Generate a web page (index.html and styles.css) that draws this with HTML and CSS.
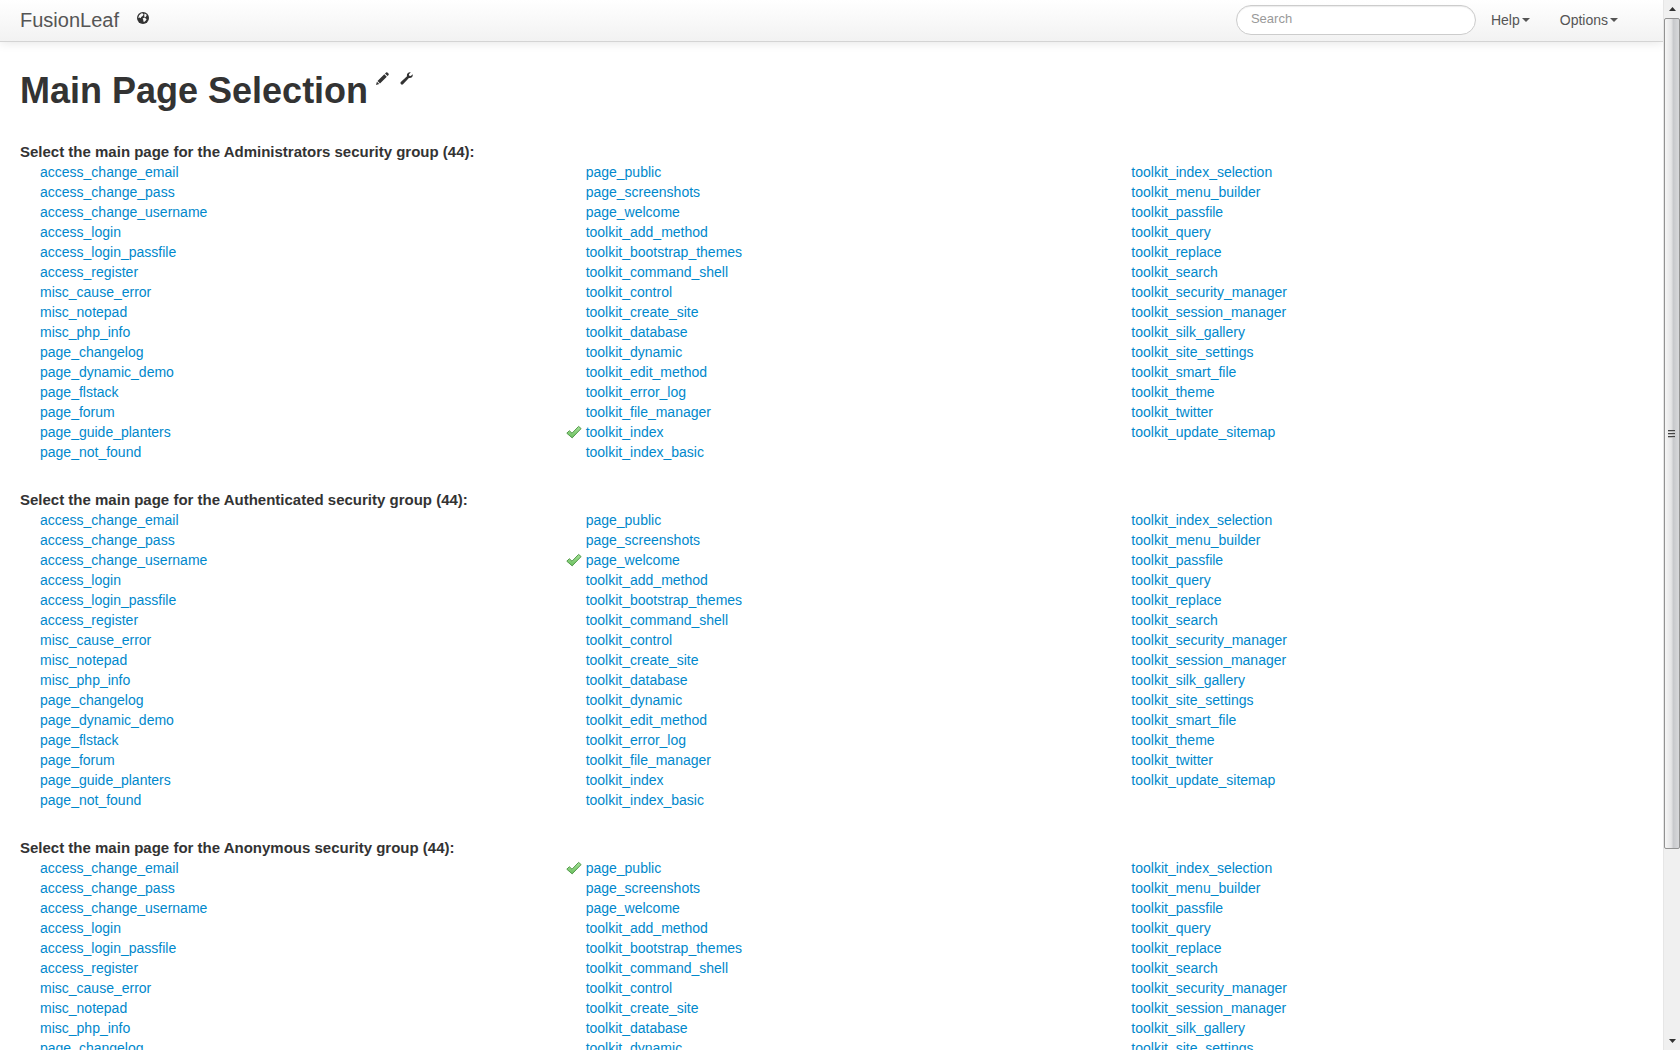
FILE: index.html
```html
<!DOCTYPE html>
<html lang="en">
<head>
<meta charset="utf-8">
<title>Main Page Selection - FusionLeaf</title>
<link rel="stylesheet" href="styles.css">
</head>
<body>
<svg class="sprite" aria-hidden="true">
  <defs>
    <linearGradient id="tick-fill" x1="0" y1="0" x2="0" y2="1">
      <stop offset="0" stop-color="#a4e096"/>
      <stop offset="1" stop-color="#6cc060"/>
    </linearGradient>
  </defs>
  <symbol id="tick" viewBox="0 0 16 16">
    <path d="M.8 9.2 3.3 6.7 6 9.2 12.6 2.4 15.1 4.6 6.2 13.9Z" fill="url(#tick-fill)" stroke="#559a4d" stroke-width="1" stroke-linejoin="round"/>
  </symbol>
</svg>
<div class="viewport">
  <div class="page">
    <header class="navbar">
      <a class="brand" href="#">FusionLeaf</a>
      <a class="globe" href="#" aria-label="Site">
        <svg width="12" height="12" viewBox="0 0 12 12"><circle cx="6" cy="6" r="6" fill="#333"/><path d="M2 3.4 4 1.4 5.4 1.2 6.6 2.4 5.6 4 4.2 5 3.6 6.2 2.4 5.4 1.2 6.2ZM7.4 1.4 9.4 2.4 9.6 3.8 8.4 5.2 7.2 4.4ZM5.6 6.6 7.6 5.6 9.6 7.2 8.8 8.6 7.2 10 6.2 9.2 6.4 8Z" fill="#fafafa"/></svg>
      </a>
      <form class="search"><input class="search-box" type="search" placeholder="Search" aria-label="Search"></form>
      <nav class="menu">
        <button class="menu-item" type="button">Help<span class="caret"></span></button>
        <button class="menu-item" type="button">Options<span class="caret"></span></button>
      </nav>
    </header>
    <main class="content">
      <div class="title">
        <h1 class="title-text">Main Page Selection</h1>
        <div class="tools">
          <a class="tool" href="#" aria-label="Edit page"><svg width="13" height="13" viewBox="0 0 13 13" fill="#333"><path d="M0 13 .9 9.7 3.3 12.1ZM1.5 9 8.3 2.2 10.8 4.7 4 11.5ZM9 1.5 10.1.4Q10.8 0 11.4.5L12.5 1.6Q13 2.2 12.6 2.9L11.5 4Z"/></svg></a>
          <a class="tool" href="#" aria-label="Page settings"><svg width="13" height="13" viewBox="0 0 13 13" fill="#333"><path d="M10.7.4 8.9 2.2 9.2 3.8 10.8 4.1 12.7 2.3C13.2 4.7 11.4 6.5 8.9 6L3 12.3C1.6 13.5-.4 11.6.8 10.1L7 4.2C6.4 1.8 8.4-.2 10.7.4Z"/></svg></a>
        </div>
      </div>

      <section class="group">
        <h2 class="group-title">Select the main page for the Administrators security group (44):</h2>
        <ul class="methods">
          <li><a href="#">access_change_email</a></li>
          <li><a href="#">access_change_pass</a></li>
          <li><a href="#">access_change_username</a></li>
          <li><a href="#">access_login</a></li>
          <li><a href="#">access_login_passfile</a></li>
          <li><a href="#">access_register</a></li>
          <li><a href="#">misc_cause_error</a></li>
          <li><a href="#">misc_notepad</a></li>
          <li><a href="#">misc_php_info</a></li>
          <li><a href="#">page_changelog</a></li>
          <li><a href="#">page_dynamic_demo</a></li>
          <li><a href="#">page_flstack</a></li>
          <li><a href="#">page_forum</a></li>
          <li><a href="#">page_guide_planters</a></li>
          <li><a href="#">page_not_found</a></li>
          <li><a href="#">page_public</a></li>
          <li><a href="#">page_screenshots</a></li>
          <li><a href="#">page_welcome</a></li>
          <li><a href="#">toolkit_add_method</a></li>
          <li><a href="#">toolkit_bootstrap_themes</a></li>
          <li><a href="#">toolkit_command_shell</a></li>
          <li><a href="#">toolkit_control</a></li>
          <li><a href="#">toolkit_create_site</a></li>
          <li><a href="#">toolkit_database</a></li>
          <li><a href="#">toolkit_dynamic</a></li>
          <li><a href="#">toolkit_edit_method</a></li>
          <li><a href="#">toolkit_error_log</a></li>
          <li><a href="#">toolkit_file_manager</a></li>
          <li class="current"><svg class="tick"><use href="#tick"/></svg><a href="#">toolkit_index</a></li>
          <li><a href="#">toolkit_index_basic</a></li>
          <li><a href="#">toolkit_index_selection</a></li>
          <li><a href="#">toolkit_menu_builder</a></li>
          <li><a href="#">toolkit_passfile</a></li>
          <li><a href="#">toolkit_query</a></li>
          <li><a href="#">toolkit_replace</a></li>
          <li><a href="#">toolkit_search</a></li>
          <li><a href="#">toolkit_security_manager</a></li>
          <li><a href="#">toolkit_session_manager</a></li>
          <li><a href="#">toolkit_silk_gallery</a></li>
          <li><a href="#">toolkit_site_settings</a></li>
          <li><a href="#">toolkit_smart_file</a></li>
          <li><a href="#">toolkit_theme</a></li>
          <li><a href="#">toolkit_twitter</a></li>
          <li><a href="#">toolkit_update_sitemap</a></li>
        </ul>
      </section>

      <section class="group">
        <h2 class="group-title">Select the main page for the Authenticated security group (44):</h2>
        <ul class="methods">
          <li><a href="#">access_change_email</a></li>
          <li><a href="#">access_change_pass</a></li>
          <li><a href="#">access_change_username</a></li>
          <li><a href="#">access_login</a></li>
          <li><a href="#">access_login_passfile</a></li>
          <li><a href="#">access_register</a></li>
          <li><a href="#">misc_cause_error</a></li>
          <li><a href="#">misc_notepad</a></li>
          <li><a href="#">misc_php_info</a></li>
          <li><a href="#">page_changelog</a></li>
          <li><a href="#">page_dynamic_demo</a></li>
          <li><a href="#">page_flstack</a></li>
          <li><a href="#">page_forum</a></li>
          <li><a href="#">page_guide_planters</a></li>
          <li><a href="#">page_not_found</a></li>
          <li><a href="#">page_public</a></li>
          <li><a href="#">page_screenshots</a></li>
          <li class="current"><svg class="tick"><use href="#tick"/></svg><a href="#">page_welcome</a></li>
          <li><a href="#">toolkit_add_method</a></li>
          <li><a href="#">toolkit_bootstrap_themes</a></li>
          <li><a href="#">toolkit_command_shell</a></li>
          <li><a href="#">toolkit_control</a></li>
          <li><a href="#">toolkit_create_site</a></li>
          <li><a href="#">toolkit_database</a></li>
          <li><a href="#">toolkit_dynamic</a></li>
          <li><a href="#">toolkit_edit_method</a></li>
          <li><a href="#">toolkit_error_log</a></li>
          <li><a href="#">toolkit_file_manager</a></li>
          <li><a href="#">toolkit_index</a></li>
          <li><a href="#">toolkit_index_basic</a></li>
          <li><a href="#">toolkit_index_selection</a></li>
          <li><a href="#">toolkit_menu_builder</a></li>
          <li><a href="#">toolkit_passfile</a></li>
          <li><a href="#">toolkit_query</a></li>
          <li><a href="#">toolkit_replace</a></li>
          <li><a href="#">toolkit_search</a></li>
          <li><a href="#">toolkit_security_manager</a></li>
          <li><a href="#">toolkit_session_manager</a></li>
          <li><a href="#">toolkit_silk_gallery</a></li>
          <li><a href="#">toolkit_site_settings</a></li>
          <li><a href="#">toolkit_smart_file</a></li>
          <li><a href="#">toolkit_theme</a></li>
          <li><a href="#">toolkit_twitter</a></li>
          <li><a href="#">toolkit_update_sitemap</a></li>
        </ul>
      </section>

      <section class="group">
        <h2 class="group-title">Select the main page for the Anonymous security group (44):</h2>
        <ul class="methods">
          <li><a href="#">access_change_email</a></li>
          <li><a href="#">access_change_pass</a></li>
          <li><a href="#">access_change_username</a></li>
          <li><a href="#">access_login</a></li>
          <li><a href="#">access_login_passfile</a></li>
          <li><a href="#">access_register</a></li>
          <li><a href="#">misc_cause_error</a></li>
          <li><a href="#">misc_notepad</a></li>
          <li><a href="#">misc_php_info</a></li>
          <li><a href="#">page_changelog</a></li>
          <li><a href="#">page_dynamic_demo</a></li>
          <li><a href="#">page_flstack</a></li>
          <li><a href="#">page_forum</a></li>
          <li><a href="#">page_guide_planters</a></li>
          <li><a href="#">page_not_found</a></li>
          <li class="current"><svg class="tick"><use href="#tick"/></svg><a href="#">page_public</a></li>
          <li><a href="#">page_screenshots</a></li>
          <li><a href="#">page_welcome</a></li>
          <li><a href="#">toolkit_add_method</a></li>
          <li><a href="#">toolkit_bootstrap_themes</a></li>
          <li><a href="#">toolkit_command_shell</a></li>
          <li><a href="#">toolkit_control</a></li>
          <li><a href="#">toolkit_create_site</a></li>
          <li><a href="#">toolkit_database</a></li>
          <li><a href="#">toolkit_dynamic</a></li>
          <li><a href="#">toolkit_edit_method</a></li>
          <li><a href="#">toolkit_error_log</a></li>
          <li><a href="#">toolkit_file_manager</a></li>
          <li><a href="#">toolkit_index</a></li>
          <li><a href="#">toolkit_index_basic</a></li>
          <li><a href="#">toolkit_index_selection</a></li>
          <li><a href="#">toolkit_menu_builder</a></li>
          <li><a href="#">toolkit_passfile</a></li>
          <li><a href="#">toolkit_query</a></li>
          <li><a href="#">toolkit_replace</a></li>
          <li><a href="#">toolkit_search</a></li>
          <li><a href="#">toolkit_security_manager</a></li>
          <li><a href="#">toolkit_session_manager</a></li>
          <li><a href="#">toolkit_silk_gallery</a></li>
          <li><a href="#">toolkit_site_settings</a></li>
          <li><a href="#">toolkit_smart_file</a></li>
          <li><a href="#">toolkit_theme</a></li>
          <li><a href="#">toolkit_twitter</a></li>
          <li><a href="#">toolkit_update_sitemap</a></li>
        </ul>
      </section>
    </main>
  </div>
  <div class="scrollbar" aria-hidden="true">
    <div class="scroll-end"><svg width="7" height="4" viewBox="0 0 7 4"><path d="M0 4 3.5 0 7 4Z" fill="#333"/></svg></div>
    <div class="scroll-track">
      <div class="scroll-thumb"><span class="grip"></span></div>
    </div>
    <div class="scroll-end"><svg width="7" height="4" viewBox="0 0 7 4"><path d="M0 0 3.5 4 7 0Z" fill="#333"/></svg></div>
  </div>
</div>
</body>
</html>
```

FILE: styles.css
```css
* {
  box-sizing: border-box;
}

body {
  margin: 0;
  background: #fff;
  color: #333;
  font: 14px/20px "Liberation Sans", Arial, sans-serif;
}

a {
  color: #0088cc;
  text-decoration: none;
}

.sprite {
  display: block;
  width: 0;
  height: 0;
}

.viewport {
  display: flex;
  height: 100vh;
  overflow: hidden;
}

.page {
  flex: 1;
  min-width: 0;
  overflow: hidden;
}

/* Top bar */
.navbar {
  display: flex;
  align-items: center;
  height: 42px;
  padding: 0 30px 2px 20px;
  background: linear-gradient(#fff, #f2f2f2);
  border-bottom: 1px solid #d4d4d4;
  box-shadow: 0 1px 10px rgba(0, 0, 0, 0.1);
}

.brand {
  color: #555;
  font-size: 20px;
}

.globe {
  display: flex;
  margin: 0 auto 3px 18px;
}

.search {
  display: flex;
}

.search-box {
  width: 240px;
  height: 30px;
  padding: 0 14px 3px;
  border: 1px solid #ccc;
  border-radius: 15px;
  background: #fff;
  box-shadow: inset 0 1px 1px rgba(0, 0, 0, 0.08);
  color: #555;
  font: 13px/18px "Liberation Sans", Arial, sans-serif;
}

.search-box::placeholder {
  color: #999;
}

.menu {
  display: flex;
}

.menu-item {
  display: flex;
  align-items: center;
  gap: 2px;
  padding: 0 15px;
  border: 0;
  background: none;
  color: #555;
  font: inherit;
}

.caret {
  border: 4px solid transparent;
  border-top-color: #555;
  border-bottom: 0;
}

/* Page heading */
.content {
  padding: 28px 20px 0;
}

.title {
  display: flex;
  align-items: flex-start;
  gap: 8px;
  margin-bottom: 30px;
}

.title-text {
  margin: 0;
  font-size: 36px;
  line-height: 42px;
}

.tools {
  display: flex;
  gap: 11px;
  padding-top: 2px;
}

.tool {
  display: flex;
}

/* Page lists */
.group {
  margin-bottom: 28px;
}

.group-title {
  margin: 0;
  font-size: 15px;
  line-height: 20px;
}

.methods {
  margin: 0;
  padding: 0;
  columns: 3;
  column-gap: 14px;
  list-style: none;
}

.methods li {
  height: 20px;
  padding-left: 20px;
  break-inside: avoid;
}

.methods .current {
  display: flex;
  align-items: center;
  gap: 4px;
  padding-left: 0;
}

.tick {
  width: 16px;
  height: 16px;
}

/* Scrollbar */
.scrollbar {
  display: flex;
  flex-direction: column;
  width: 17px;
  background: #f0f0f0;
  border-left: 1px solid #e6e6e6;
}

.scroll-end {
  display: flex;
  align-items: center;
  justify-content: center;
  height: 18px;
}

.scroll-track {
  flex: 1;
}

.scroll-thumb {
  display: flex;
  align-items: center;
  justify-content: center;
  height: 82%;
  padding-right: 2px;
  border: 1px solid #929292;
  border-radius: 2px;
  background: linear-gradient(90deg, #f6f6f6, #e4e4e5 45%, #c8c9cc 60%, #d8d9db);
}

.grip {
  width: 7px;
  height: 8px;
  background: repeating-linear-gradient(#444 0 1px, #bbb 1px 2px, transparent 2px 3px);
}
```
